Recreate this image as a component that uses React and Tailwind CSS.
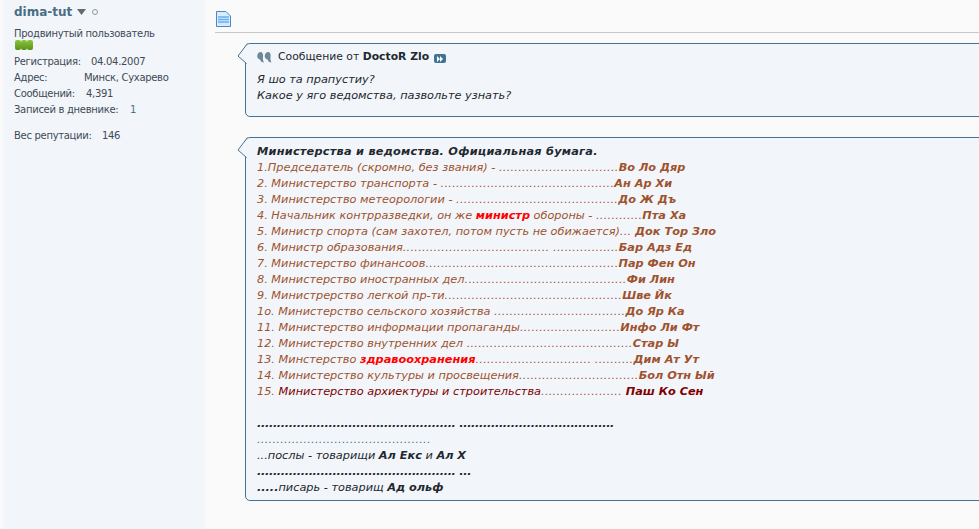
const brown = 'text-[#a0522d]';

const ministries = [
  { text: '1.Председатель (скромно, без звания) - ...............................', name: 'Во Ло Дяр' },
  { text: '2. Министерство транспорта - .............................................', name: 'Ан Ар Хи' },
  { text: '3. Министерство метеорологии - ..........................................', name: 'До Ж Дъ' },
  { text: '5. Министр спорта (сам захотел, потом пусть не обижается)... ', name: 'Док Тор Зло' },
  { text: '6. Министр образования...................................... .................', name: 'Бар Адз Ед' },
  { text: '7. Министерство финансоов..................................................', name: 'Пар Фен Он' },
  { text: '8. Министерство иностранных дел..........................................', name: 'Фи Лин' },
  { text: '9. Министрерство легкой пр-ти..............................................', name: 'Шве Йк' },
  { text: '1о. Министерство сельского хозяйства ..................................', name: 'До Яр Ка' },
  { text: '11. Министерство информации пропаганды..........................', name: 'Инфо Ли Фт' },
  { text: '12. Министерство внутренних дел ...........................................', name: 'Стар Ы' },
];

// dot leaders run a little wider than the letters
function Dots({ children }) {
  return <span className="tracking-[0.27px]">{children}</span>;
}

function withDots(text) {
  return text.split(/(\.{2,})/).map((part, i) => (i % 2 ? <Dots key={i}>{part}</Dots> : part));
}

function Line({ text, name, className = brown }) {
  return (
    <div className={className}>
      {withDots(text)}
      <b>{name}</b>
    </div>
  );
}

function Bubble({ className = '', children }) {
  return (
    <div className={`relative w-[760px] rounded-[5px] border border-[#417394] bg-[#f2f6fa] pl-[11px] ${className}`}>
      <svg className="absolute left-[-9px] top-[-1px]" width="11" height="22" viewBox="0 0 11 22">
        <path d="M10.5 0.5 L1 13 L9.5 20.5" fill="#f2f6fa" stroke="#417394" strokeWidth="1" />
      </svg>
      {children}
    </div>
  );
}

function Stat({ label, width, children, className = '' }) {
  return (
    <div className={`flex h-[16px] whitespace-nowrap ${className}`}>
      <span style={{ width }}>{label}</span>
      {children}
    </div>
  );
}

function RankBar() {
  return <span className="h-[10px] w-[6px] rounded-[2px] bg-linear-to-b from-[#8cc63f] to-[#5a9216]" />;
}

export default function App() {
  return (
    <div className="flex h-[529px] w-[979px] overflow-hidden bg-[#fafafa] font-['DejaVu_Sans',sans-serif] text-[11.3px] leading-[16px] text-[#22282e]">
      <aside className="ml-[3px] w-[202px] shrink-0 bg-[#f2f6fa] pl-[11px] text-[10px] tracking-[-0.3px] text-[#3e4a56]">
        <div className="mt-[2px] flex h-[19px] items-center text-[12px] font-bold tracking-normal text-[#4a6d85]">
          dima-tut
          <svg className="ml-[5px]" width="9" height="6" viewBox="0 0 9 6">
            <path d="M0 0 H9 L4.5 6 Z" fill="#5f6b76" />
          </svg>
          <span className="ml-[6px] h-[6px] w-[6px] rounded-full border border-[#8f98a0]" />
        </div>
        <div className="mt-[5px] whitespace-nowrap">Продвинутый пользователь</div>
        <div className="ml-px mt-[-2px] flex h-[10px]">
          <RankBar />
          <RankBar />
          <RankBar />
        </div>
        <Stat label="Регистрация:" width={77} className="mt-[4px]">04.04.2007</Stat>
        <Stat label="Адрес:" width={70}>Минск, Сухарево</Stat>
        <Stat label="Сообщений:" width={72}>4,391</Stat>
        <Stat label="Записей в дневнике:" width={116}><span className="text-[#417394]">1</span></Stat>
        <Stat label="Вес репутации:" width={88} className="mt-[10px]">146</Stat>
      </aside>

      <main className="min-w-0 flex-1">
        <div className="ml-[10px] h-[33px] border-b border-[#c8c8c8] pl-px pt-[11px]">
          <svg width="15" height="16" viewBox="0 0 15 16">
            <path d="M0.5 0.5 H10 L14.5 5 V15.5 H0.5 Z" fill="#d8ecfc" stroke="#4a86c8" />
            <path d="M2 5 H13 V13.5 H2 Z" fill="#cfe6fb" />
            <path d="M2 6 H13 M2 8.5 H13 M2 11 H13" stroke="#6db3ee" strokeWidth="1.5" />
          </svg>
        </div>

        <Bubble className="ml-[40px] mt-[10px] h-[74px]">
          <div className="flex h-[26px] items-center text-[10.8px]">
            <svg width="15" height="11" viewBox="0 0 15 11">
              <path d="M3.5 0 C5.5 0 6.5 2 6 5 C5.8 7 6 9 7 10.5 C5 10.5 3.5 9.5 3 7.5 C1 7 0 5.5 0.3 3.5 C0.6 1.2 2 0 3.5 0 Z" fill="#6b8798" />
              <path d="M11 0 C13 0 14 2 13.5 5 C13.3 7 13.5 9 14.5 10.5 C12.5 10.5 11 9.5 10.5 7.5 C8.5 7 7.5 5.5 7.8 3.5 C8.1 1.2 9.5 0 11 0 Z" fill="#6b8798" />
            </svg>
            <span className="ml-[6px]">Сообщение от <b>DoctoR Zlo</b></span>
            <span className="ml-[5px] mt-[3px] flex h-[9px] w-[12px] items-center justify-center rounded-[2px] bg-[#417394]">
              <svg width="8" height="6" viewBox="0 0 8 6"><path d="M1 0 L4 3 L1 6 Z M4 0 L7 3 L4 6 Z" fill="#fff" /></svg>
            </span>
          </div>
          <div className="mt-[2px] italic">
            Я шо та прапустиу?<br />
            Какое у яго ведомства, пазвольте узнать?
          </div>
        </Bubble>

        <Bubble className="ml-[40px] mt-[20px] h-[364px] pt-[6px] italic">
          <b className="tracking-[0.25px]">Министерства и ведомства. Официальная бумага.</b>
          {ministries.slice(0, 3).map((row) => <Line key={row.name} {...row} />)}
          <div className={brown}>
            4. Начальник контрразведки, он же <b className="text-[#ff0000]">министр</b> обороны - <Dots>............</Dots><b>Пта Ха</b>
          </div>
          {ministries.slice(3).map((row) => <Line key={row.name} {...row} />)}
          <div className={brown}>
            13. Минстерство <b className="text-[#ff0000]">здравоохранения</b><Dots>..............................</Dots> <Dots>..........</Dots><b>Дим Ат Ут</b>
          </div>
          <Line text="14. Министерство культуры и просвещения..............................." name="Бол Отн Ый" />
          <div className="text-[#800000]">
            <span className={brown}>15.</span> Министерство архиектуры и строительства<span className={brown}><Dots>.....................</Dots></span> <b>Паш Ко Сен</b>
          </div>
          <div className="h-[16px]" />
          <b className="tracking-[-0.32px]">.................................................. .......................................</b>
          <div className="text-[#417394]"><Dots>.............................................</Dots></div>
          <div>...послы - товарищи <b>Ал Екс</b> и <b>Ал Х</b></div>
          <b className="tracking-[-0.32px]">.................................................. ...</b>
          <div><b>.....</b>писарь - товарищ <b>Ад ольф</b></div>
        </Bubble>
      </main>
    </div>
  );
}
